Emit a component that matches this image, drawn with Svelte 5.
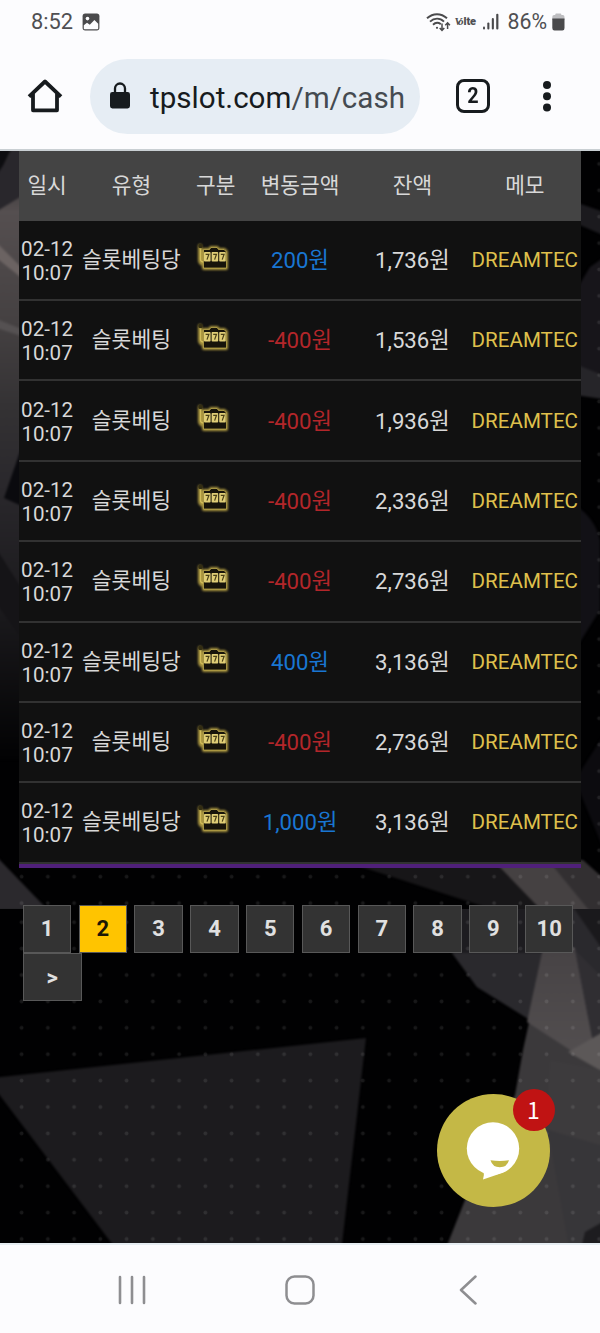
<script>
	const rows = [
		{ type: '슬롯베팅당', amount: '200', balance: '1,736' },
		{ type: '슬롯베팅', amount: '-400', balance: '1,536' },
		{ type: '슬롯베팅', amount: '-400', balance: '1,936' },
		{ type: '슬롯베팅', amount: '-400', balance: '2,336' },
		{ type: '슬롯베팅', amount: '-400', balance: '2,736' },
		{ type: '슬롯베팅당', amount: '400', balance: '3,136' },
		{ type: '슬롯베팅', amount: '-400', balance: '2,736' },
		{ type: '슬롯베팅당', amount: '1,000', balance: '3,136' }
	];

	const headers = ['일시', '유형', '구분', '변동금액', '잔액', '메모'];
	const pages = ['1', '2', '3', '4', '5', '6', '7', '8', '9', '10', '>'];

	let current = $state('2');
</script>

<div class="phone">
	<div class="status">
		<span class="clock">8:52</span>
		<svg class="photo" width="18" height="18" viewBox="0 0 18 18">
			<rect x="0.6" y="0.6" width="16.8" height="16.8" rx="2.6" fill="#4a4a4c" />
			<circle cx="5.5" cy="5.6" r="1.8" fill="#fcfcfe" />
			<path d="M1.8 12.200 5 9.800l2.800 2 4.600-4.800 3.800 3.700v4.800a.8.8 0 0 1-.8.8H2.600a.8.8 0 0 1-.8-.8z" fill="#fcfcfe" />
		</svg>
		<div class="signals">
			<svg width="25" height="20" viewBox="0 0 25 20" fill="none" stroke="#4a4a4c" stroke-width="1.9">
				<path d="M1 6.300C7 .8 15 .8 21 6.300M4 9.600c4.200-4 10-4 14 0M7 12.700c2.400-2.300 5.300-2.300 7.800-.6" />
				<circle cx="11" cy="15.800" r="1.100" fill="#4a4a4c" stroke="none" />
				<path d="M16 11.500v6.500M13.700 15.900l2.300 2.400 2.300-2.400M21.600 17v-6M19.300 13.200l2.300-2.400 2.300 2.400" stroke-width="1.500" />
			</svg>
			<span class="volte"><i>Vo</i>lte</span>
			<svg class="bars" width="16" height="18" viewBox="0 0 16 18" fill="#4a4a4c">
				<rect x="0" y="13.500" width="2" height="3" rx="1" />
				<rect x="4.300" y="9.500" width="2.100" height="7" rx="1" />
				<rect x="8.800" y="5" width="2.100" height="11.500" rx="1" />
				<rect x="13.200" y="0.700" width="2.200" height="15.800" rx="1" />
			</svg>
			<span class="percent">86%</span>
			<svg class="battery" width="13" height="18" viewBox="0 0 13 18">
				<path d="M3.300 2V1.200Q3.300.4 4.200.4h4.200q.9 0 .9.8V2h1.400Q12.500 2 12.500 4v3H.3V4q0-2 1.800-2z" fill="#bdbdc0" />
				<path d="M.3 5.500h12.200V15q0 2.500-2.200 2.500H2.500Q.3 17.500.3 15z" fill="#4a4a4c" />
			</svg>
		</div>
	</div>

	<div class="toolbar">
		<svg class="home" width="36" height="36" viewBox="0 0 36 36" fill="none" stroke="#171b1e" stroke-width="3.8" stroke-linejoin="round">
			<path d="M2 18.600 18 3.500l16 15.100M6 15.500V32.300h24V15.500" />
		</svg>
		<div class="address">
			<svg width="20" height="28" viewBox="0 0 20 28">
				<rect x="0" y="10" width="20" height="16.500" rx="2.400" fill="#171b1e" />
				<path d="M5 11V6.500a5 5 0 0 1 10 0V11" fill="none" stroke="#171b1e" stroke-width="2.300" />
			</svg>
			<span class="url">tpslot.com<span>/m/cash</span></span>
		</div>
		<div class="tabs"><span>2</span></div>
		<svg class="more" width="10" height="32" viewBox="0 0 10 32" fill="#171b1e">
			<circle cx="5" cy="5" r="4" />
			<circle cx="5" cy="16.200" r="4" />
			<circle cx="5" cy="27.400" r="4" />
		</svg>
	</div>

	<main>
		<svg class="backdrop" width="600" height="1092" viewBox="0 151 600 1092" preserveAspectRatio="none">
			<defs>
				<pattern id="dots-top" x="8.500" y="150.700" width="26.250" height="26.400" patternUnits="userSpaceOnUse">
					<circle cx="13.100" cy="13.200" r="1.900" fill="#fff" opacity="0.09" />
				</pattern>
				<pattern id="dots-bottom" x="8.500" y="909" width="26.250" height="26.400" patternUnits="userSpaceOnUse">
					<circle cx="13.100" cy="13.200" r="1.900" fill="#fff" opacity="0.09" />
				</pattern>
				<linearGradient id="left" x1="0" y1="151" x2="0" y2="760" gradientUnits="userSpaceOnUse">
					<stop offset="0" stop-color="#29272a" />
					<stop offset="0.1" stop-color="#554f50" />
					<stop offset="0.28" stop-color="#454142" />
					<stop offset="0.42" stop-color="#343234" />
					<stop offset="0.55" stop-color="#2a282c" />
					<stop offset="0.75" stop-color="#1b1a1d" />
					<stop offset="1" stop-color="#020203" />
				</linearGradient>
				<linearGradient id="shard" x1="0" y1="950" x2="0" y2="1070" gradientUnits="userSpaceOnUse">
					<stop offset="0" stop-color="#474345" />
					<stop offset="1" stop-color="#545051" />
				</linearGradient>
				<clipPath id="upper"><path d="M0 151h600v758H0z" /></clipPath>
				<clipPath id="lower"><path d="M0 909h600v334H0z" /></clipPath>
			</defs>
			<rect y="151" width="600" height="1092" fill="#010102" />

			<g clip-path="url(#upper)">
				<g class="soft">
					<rect x="-9" y="141" width="34" height="619" fill="url(#left)" />
					<path d="M-9 141h24L-9 191z" fill="#0d0d10" />
					<path d="M13 151h12v43L-6 213v-34z" fill="#29272c" />
					<path d="M-6 240l30 30v10L-6 256z" fill="#6b6362" />
					<path d="M-6 318l30 12v7L-6 327z" fill="#555152" />
					<path d="M24 440v67l-20-9z" fill="#0a0a0e" />
					<path d="M-6 545l30 47v50L-6 600z" fill="#151417" />
					<path d="M-6 854l54 56H-6z" fill="#2b292d" />

					<path d="M575 202l35 12v24l-35-15z" fill="#1b1a1e" />
					<path d="M575 292l15-25 20-14v120h-35z" fill="#17151a" />
					<path d="M575 364l35 14v22l-35-5z" fill="#262529" />
					<path d="M575 505q20 13 25 35v70l-25 40z" fill="#121116" />
					<path d="M575 780l35-55v140z" fill="#0c0b0f" />

					<path d="M340 860h240l30 25v30H510z" fill="#171618" />
					<path d="M493 860h82l30 52h-62z" fill="#454142" />
					<path d="M548 860h35l27 24v36h-13z" fill="#322f31" />
				</g>
			</g>

			<g clip-path="url(#lower)">
				<g class="soft">
					<path d="M425 900h185v120h-80l-53-33-25-34z" fill="#1d1c20" />
					<path d="M452 953l25 34 53 33 80 70V900h-55v53z" fill="#2a292d" />
					<path d="M530 1018h80v235H444l21-53 50-105 8-45z" fill="#3b393b" />
					<path d="M543 948h32l23 120-71-46z" fill="url(#shard)" />
					<path d="M568 900h42v60z" fill="#1a191c" />
					<path d="M575 950l35 35v85l-12-2z" fill="#302e32" />
					<path d="M568 1052l42-24v48z" fill="#5c5858" />
					<path d="M550 1060l60 12v90l-65-30z" fill="#3d3b3d" />
					<path d="M548 1130l62 18v60l-20 45h-20z" fill="#373639" />
					<path d="M585 1232l25-14v35h-30z" fill="#1d1c1f" />

					<path d="M-8 1078l374-40-25 215H119L-8 1085z" fill="#1c1b1e" />
				</g>
			</g>
			<rect y="151" width="600" height="758" fill="url(#dots-top)" />
			<rect y="909" width="600" height="334" fill="url(#dots-bottom)" />
		</svg>

		<div class="table">
			<div class="row head">
				{#each headers as title}
					<div>{title}</div>
				{/each}
			</div>
			{#each rows as row}
				<div class="row">
					<div class="date"><span>02-12</span><span>10:07</span></div>
					<div class="type">{row.type}</div>
					<div class="kind">
						<svg width="36" height="34" viewBox="0 0 36 34">
							<g class="halo" fill="#a8943f" stroke="#a8943f" stroke-width="4" stroke-linejoin="round" stroke-linecap="round">
								<path d="M5 5v14q0 3 3 4" fill="none" />
								<path d="M9 9h6l1-2h6l1 2h6l2 2v16H9z" />
							</g>
							<path d="M5.500 5v13.500q0 2 2.500 2.500" fill="none" stroke="#d0bb58" stroke-width="1.300" />
							<path d="M8.500 8.500h6l1.500-2h6l1.500 2h5.500l2.500 2.500v16h-23z" fill="#17140a" stroke="#c5b152" stroke-width="0.700" />
							<circle cx="5.500" cy="5" r="2.300" fill="#332d12" />
							<g fill="#e0ce76">
								<rect x="9" y="11" width="6.600" height="9.500" rx="0.800" />
								<rect x="16.600" y="11" width="6.600" height="9.500" rx="0.800" />
								<rect x="24.200" y="11" width="6.600" height="9.500" rx="0.800" />
							</g>
							<path d="M10.600 13.300h3.300L12 18.600M18.200 13.300h3.300l-1.900 5.300M25.800 13.300h3.300l-1.900 5.300" fill="none" stroke="#4a4017" stroke-width="1.200" />
						</svg>
					</div>
					<div class="amount" class:minus={row.amount.startsWith('-')}>{row.amount}원</div>
					<div class="balance">{row.balance}원</div>
					<div class="memo">DREAMTEC</div>
				</div>
			{/each}
		</div>

		<nav class="pages">
			{#each pages as page}
				<button class:active={page === current} class:next={page === '>'} onclick={() => (current = page)}>{page}</button>
			{/each}
		</nav>

		<div class="chat">
			<svg width="54" height="60" viewBox="0 0 54 60">
				<circle cx="27" cy="27.500" r="26.200" fill="#fff" />
				<path d="M17.500 50q1 4-.5 8.500Q30 54.500 40 50l-10-6z" fill="#fff" />
				<path d="M24.500 39.300q9.300 1.500 18.500 0-2 7-9.200 7t-9.300-7z" fill="#c4b846" />
			</svg>
			<span class="badge">1</span>
		</div>
	</main>

	<div class="navbar">
		<svg width="28" height="30" viewBox="0 0 28 30" fill="none" stroke="#8e8e91" stroke-width="2.600" stroke-linecap="round">
			<path d="M2 2v26M14 2v26M26 2v26" />
		</svg>
		<svg width="30" height="30" viewBox="0 0 30 30" fill="none" stroke="#8e8e91" stroke-width="2.500">
			<rect x="1.500" y="1.500" width="27" height="27" rx="8" />
		</svg>
		<svg width="28" height="30" viewBox="0 0 28 30" fill="none" stroke="#8e8e91" stroke-width="2.500" stroke-linecap="round" stroke-linejoin="round">
			<path d="M21.500 1.500 7 15l14.500 13.500" />
		</svg>
	</div>
</div>

<style>
	:global(body) {
		margin: 0;
		background: #fcfcfe;
	}

	.phone {
		width: 600px;
		height: 1333px;
		display: flex;
		flex-direction: column;
		overflow: hidden;
		background: #fcfcfe;
		font-family: Roboto, 'Noto Sans CJK KR', sans-serif;
	}

	svg {
		display: block;
		flex: none;
	}

	.status {
		height: 43px;
		display: flex;
		align-items: center;
		padding: 0 35px 0 31px;
		color: #4f4f52;
		font-size: 21.8px;
		box-sizing: border-box;
	}

	.photo {
		margin-left: 9px;
	}

	.signals {
		display: flex;
		align-items: center;
		margin-left: auto;
	}

	.volte {
		width: 24px;
		margin-left: 3px;
		font-size: 11px;
		font-weight: 900;
		letter-spacing: -0.2px;
		white-space: nowrap;
	}

	.volte i {
		font-family: 'Liberation Serif', serif;
		font-weight: 700;
		font-size: 11px;
		letter-spacing: -2.5px;
		margin-right: 2.5px;
	}

	.bars {
		margin-left: 5px;
	}

	.percent {
		margin-left: 8px;
		font-size: 21.3px;
	}

	.battery {
		margin-left: 5px;
	}

	.toolbar {
		height: 108px;
		display: flex;
		align-items: center;
		padding: 0 48px 0 27px;
		box-sizing: border-box;
		border-bottom: 2px solid #c9cfd3;
	}

	.address {
		width: 330px;
		height: 75px;
		display: flex;
		align-items: center;
		margin-left: 27px;
		padding-left: 20px;
		box-sizing: border-box;
		border-radius: 38px;
		background: #e6edf4;
	}

	.url {
		margin-left: 20px;
		padding-top: 3px;
		font-size: 29.6px;
		color: #171b1e;
		white-space: nowrap;
	}

	.url span {
		color: #454b51;
	}

	.tabs {
		width: 34px;
		height: 34px;
		margin-left: 36px;
		box-sizing: border-box;
		border: 3.5px solid #171b1e;
		border-radius: 8px;
		font-size: 22px;
		font-weight: 700;
		line-height: 28px;
		text-align: center;
		color: #171b1e;
	}

	.tabs span {
		display: block;
		transform: scaleX(0.9);
	}

	.more {
		margin-left: auto;
	}

	main {
		position: relative;
		height: 1092px;
		flex: none;
		overflow: hidden;
	}

	.backdrop {
		position: absolute;
		inset: 0;
	}

	.soft {
		filter: blur(1.2px);
	}

	.table {
		position: relative;
		margin: 0 19px;
		border-bottom: 4px solid #50207a;
	}

	.row {
		height: 80.35px;
		display: grid;
		grid-template-columns: 1fr 2fr 1fr 2fr 2fr 2fr;
		align-items: center;
		justify-items: center;
		box-sizing: border-box;
		border-bottom: 2px solid #323232;
		background: #111;
		color: #d8d8d8;
		font-size: 21.5px;
		line-height: 24px;
		white-space: nowrap;
	}

	.row > div {
		display: flex;
		justify-content: center;
		width: 0;
	}

	.row.head {
		height: 69.8px;
		border: 0;
		background: #444;
		font-size: 21.4px;
	}

	.row .date {
		flex-direction: column;
		align-items: center;
		padding-top: 2px;
		font-size: 20.6px;
	}

	.kind svg {
		margin-right: 6px;
		margin-bottom: 4px;
	}

	.halo {
		filter: blur(1.3px);
	}

	.amount {
		color: #1976d2;
		font-size: 22.2px;
	}

	.minus {
		color: #b3262a;
	}

	.balance {
		font-size: 22.2px;
	}

	.memo {
		color: #dfc04c;
		font-size: 20.6px;
	}

	.pages {
		position: relative;
		display: flex;
		flex-wrap: wrap;
		column-gap: 7.3px;
		margin: 37.2px 19px 0 22.800px;
	}

	.pages button {
		width: 48.5px;
		height: 48.3px;
		padding: 0;
		box-sizing: border-box;
		border: 1.5px solid #585858;
		background: #333;
		color: #e0e0e0;
		font-family: inherit;
		font-size: 22px;
		font-weight: 700;
	}

	.pages button.active {
		background: #ffc400;
		color: #1b1705;
	}

	.pages button.next {
		width: 59px;
	}

	.chat {
		position: absolute;
		right: 50.5px;
		bottom: 36px;
		width: 113px;
		height: 113px;
		display: flex;
		align-items: center;
		justify-content: center;
		border-radius: 50%;
		background: #c4b846;
	}

	.badge {
		position: absolute;
		top: -5px;
		right: -5px;
		width: 42px;
		height: 42px;
		border-radius: 50%;
		background: #c01313;
		color: #fff;
		font-family: 'Noto Sans CJK KR', sans-serif;
		font-size: 23px;
		line-height: 41px;
		text-align: center;
	}

	.navbar {
		flex: 1;
		display: flex;
		align-items: center;
		justify-content: space-between;
		padding: 1px 118px 0 118px;
		border-top: 2px solid #e6edf2;
		box-sizing: border-box;
	}
</style>
